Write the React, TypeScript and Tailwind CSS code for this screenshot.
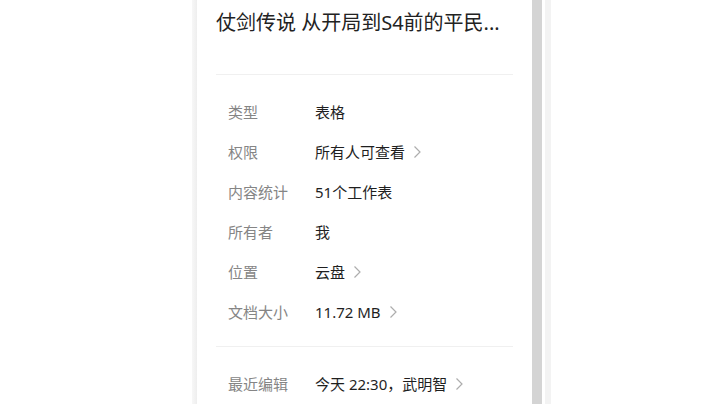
import React from "react";

const Chevron = () => (
  <svg width="9" height="14" viewBox="0 0 9 14" className="ml-[8px] shrink-0" fill="none">
    <path d="M1.5 1.5 L7 7 L1.5 12.5" stroke="#adadad" strokeWidth="1.2" />
  </svg>
);

type Row = { label: string; value: string; arrow?: boolean };

const rows: Row[] = [
  { label: "类型", value: "表格" },
  { label: "权限", value: "所有人可查看", arrow: true },
  { label: "内容统计", value: "51个工作表" },
  { label: "所有者", value: "我" },
  { label: "位置", value: "云盘", arrow: true },
  { label: "文档大小", value: "11.72 MB", arrow: true },
];

const InfoRow = ({ r }: { r: Row }) => (
  <div className="flex h-[40px] items-center pl-[12px]">
    <div className="w-[87px] shrink-0 text-[15px] leading-[20px] text-[#858585]">{r.label}</div>
    <div className="flex items-center text-[15px] leading-[20px] text-[#1f1f1f]">
      <span>{r.value}</span>
      {r.arrow && <Chevron />}
    </div>
  </div>
);

export default function App() {
  return (
    <div
      className="flex h-[404px] w-[720px] overflow-hidden bg-white"
      style={{ fontFamily: '"Noto Sans", "Noto Sans CJK SC", sans-serif' }}
    >
      <div className="w-[192px] shrink-0" />
      <div className="w-[5px] shrink-0 bg-gradient-to-r from-[#f7f7f7] to-[#eeeeee]" />
      <div className="flex w-[335px] shrink-0 flex-col px-[19px]">
        <div className="mt-[8px] h-[30px] whitespace-nowrap text-[20px] leading-[30px] text-[#222222]">
          仗剑传说 从开局到S4前的平民...
        </div>
        <div className="mt-[36px] h-px bg-[#f0f0f0]" />
        <div className="mt-[17px] flex flex-col">
          {rows.map((r) => (
            <InfoRow key={r.label} r={r} />
          ))}
        </div>
        <div className="mt-[14px] h-px bg-[#f0f0f0]" />
        <div className="mt-[18px]">
          <InfoRow r={{ label: "最近编辑", value: "今天 22:30，武明智", arrow: true }} />
        </div>
      </div>
      <div className="w-[10px] shrink-0 bg-[#d4d4d4]" />
      <div className="w-[3px] shrink-0" />
      <div className="w-[6px] shrink-0 bg-[#f3f3f3]" />
      <div className="flex-1" />
    </div>
  );
}
